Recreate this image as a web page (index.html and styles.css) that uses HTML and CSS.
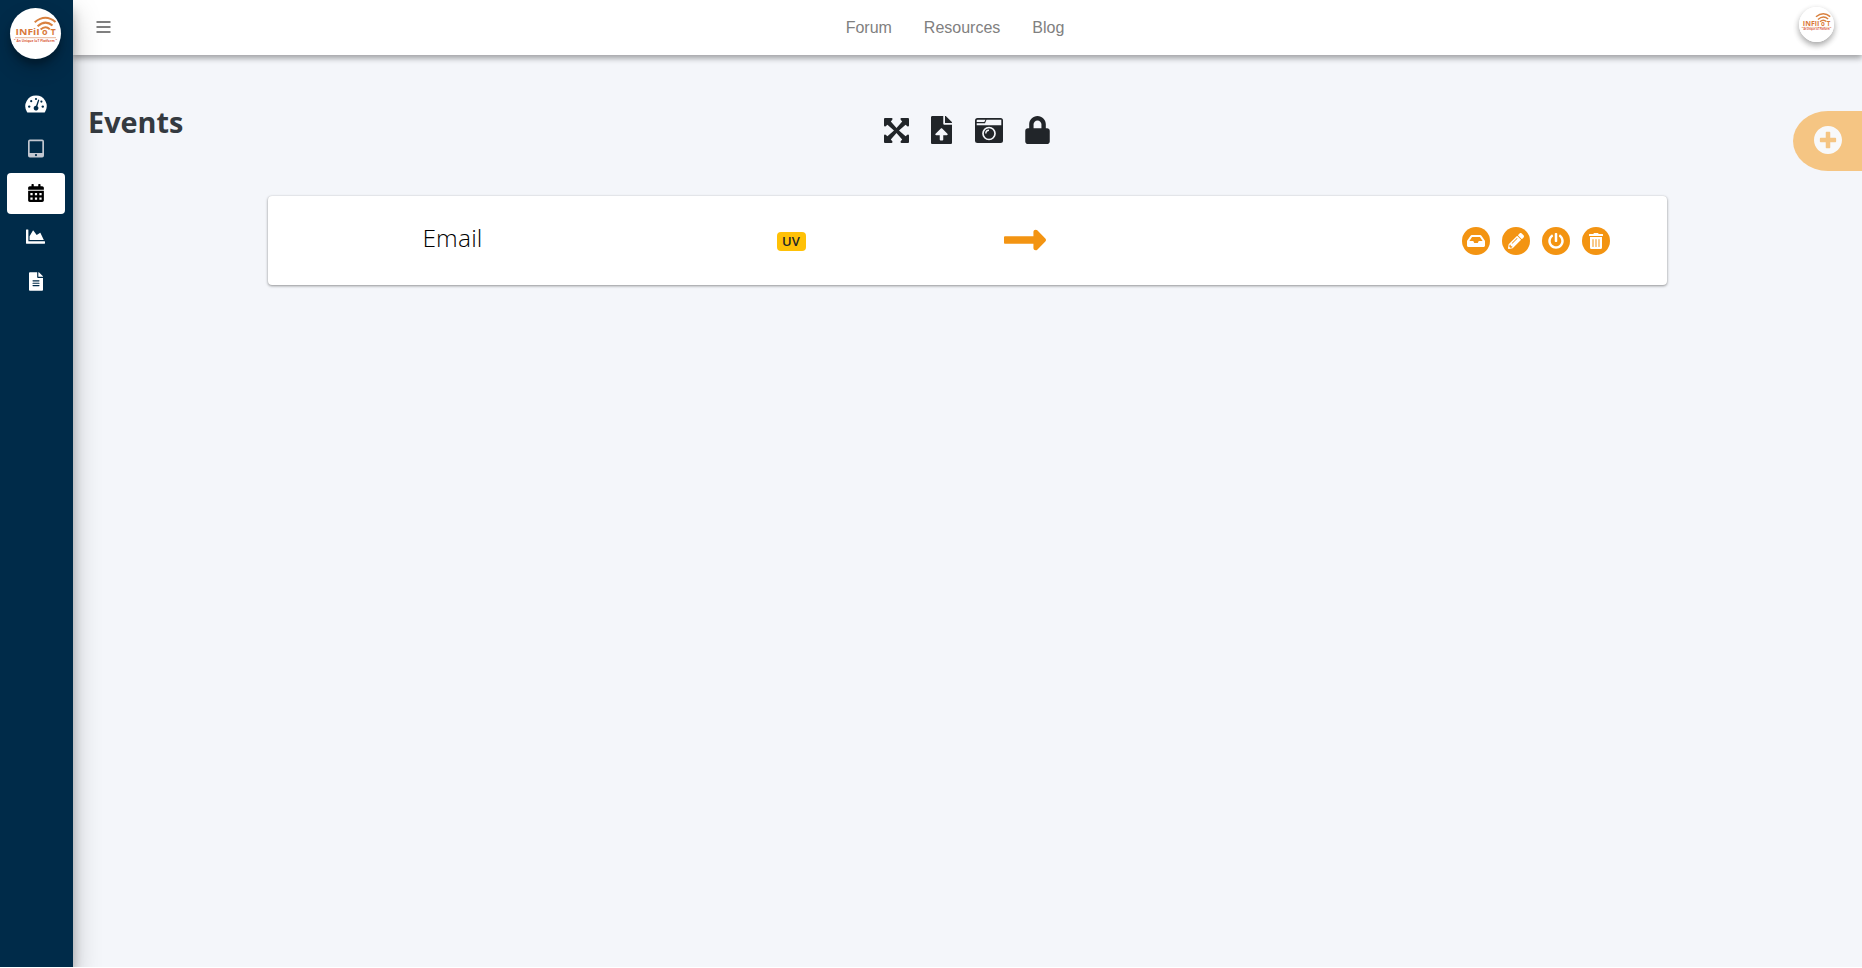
FILE: index.html
```
<!DOCTYPE html>
<html lang="en">
<head>
  <meta charset="UTF-8" />
  <title>Events</title>
  <link rel="stylesheet" href="styles.css">
</head>
<body>
  <svg class="defs">
    <symbol id="logo" viewBox="0 0 51 51" overflow="visible">
      <circle cx="25.5" cy="25.5" r="25.5" fill="#fff"/>
      <g fill="none" stroke="#d9813f" stroke-width="2">
        <path d="M24.7 14.2Q35.5 5.4 45.5 14"/>
        <path d="M27.6 18.2Q35.5 11.4 42.5 17.6"/>
        <path d="M30.6 21.6Q35.3 17.2 39.8 21.2"/>
      </g>
      <g fill="#d9793a" font-family="Open Sans, sans-serif" font-weight="700" font-size="9">
        <text x="5.6" y="27.4" textLength="24" lengthAdjust="spacingAndGlyphs">INFiI</text>
        <text x="32" y="27.4">o</text>
        <text x="40.6" y="27.4">T</text>
      </g>
      <path d="M5 29.7H46" stroke="#e0956a" stroke-width=".7"/>
      <text x="4" y="34.2" font-size="3.6" textLength="43" lengthAdjust="spacingAndGlyphs" fill="#d9583a" font-weight="700" font-family="Open Sans, sans-serif">" An Unique IoT Platform "</text>
    </symbol>
  </svg>

  <aside class="sidebar">
    <svg class="brand"><use href="#logo"/></svg>
    <nav class="menu">
      <a class="menu-item"><svg width="22" height="18" viewBox="0 0 22 18"><path fill="currentColor" d="M11 0.6A10.6 10.6 0 0 0 2 16.9Q2.3 17.4 2.9 17.4H19.1Q19.7 17.4 20 16.9A10.6 10.6 0 0 0 11 .6z"/><g fill="#002b49"><circle cx="11" cy="4" r="1.1"/><circle cx="6.2" cy="6.2" r="1.1"/><circle cx="4.2" cy="11.6" r="1.2"/><circle cx="17.8" cy="11.6" r="1.2"/><circle cx="16.4" cy="6.6" r="1.1"/><path d="M13.2 4.6l1.1.4-1.9 6.2a2.4 2.4 0 1 1-1.4-.4z"/></g></svg></a>
      <a class="menu-item muted"><svg width="16" height="19" viewBox="0 0 17 19"><path fill="currentColor" fill-rule="evenodd" d="M2 0H15a2 2 0 0 1 2 2V17a2 2 0 0 1-2 2H2a2 2 0 0 1-2-2V2A2 2 0 0 1 2 0zM1.8 1.8V14.2H15.2V1.8zM8.5 15.3a1.2 1.2 0 1 0 0 2.4 1.2 1.2 0 0 0 0-2.4z"/></svg></a>
      <a class="menu-item active"><svg width="16" height="18" viewBox="0 0 448 512"><path fill="currentColor" fill-rule="evenodd" d="M0 464c0 26.500 21.500 48 48 48h352c26.500 0 48-21.500 48-48V192H0zM64 256h64v64H64zm128 0h64v64h-64zm128 0h64v64h-64zM64 384h64v64H64zm128 0h64v64h-64zm128 0h64v64h-64zM400 64h-48V16c0-8.800-7.200-16-16-16h-32c-8.800 0-16 7.200-16 16v48H160V16c0-8.800-7.200-16-16-16h-32c-8.800 0-16 7.200-16 16v48H48C21.500 64 0 85.500 0 112v48h448v-48c0-26.500-21.500-48-48-48z"/></svg></a>
      <a class="menu-item"><svg width="19" height="19" viewBox="0 0 512 512"><path fill="currentColor" d="M500 384c6.600 0 12 5.400 12 12v40c0 6.600-5.400 12-12 12H12c-6.600 0-12-5.400-12-12V76c0-6.600 5.400-12 12-12h40c6.600 0 12 5.400 12 12v308h436zM372.700 159.500L288 216l-85.300-113.700c-5.100-6.800-15.500-6.300-19.900 1L96 248v104h384l-89.900-187.800c-3.200-6.500-11.400-8.700-17.400-4.700z"/></svg></a>
      <a class="menu-item"><svg width="14" height="19" viewBox="0 0 384 512"><path fill="currentColor" d="M224 136V0H24C10.700 0 0 10.700 0 24v464c0 13.300 10.700 24 24 24h336c13.300 0 24-10.700 24-24V160H248c-13.200 0-24-10.800-24-24zm64 236c0 6.600-5.400 12-12 12H108c-6.600 0-12-5.400-12-12v-8c0-6.600 5.400-12 12-12h168c6.600 0 12 5.400 12 12v8zm0-64c0 6.600-5.400 12-12 12H108c-6.600 0-12-5.400-12-12v-8c0-6.600 5.400-12 12-12h168c6.600 0 12 5.400 12 12v8zm0-72v8c0 6.600-5.400 12-12 12H108c-6.600 0-12-5.400-12-12v-8c0-6.600 5.400-12 12-12h168c6.600 0 12 5.400 12 12zm96-114.100v6.100H256V0h6.100c6.400 0 12.500 2.500 17 7l97.900 98c4.500 4.500 7 10.600 7 16.900z"/></svg></a>
    </nav>
  </aside>

  <div class="main">
    <header class="navbar">
      <svg class="bars" width="14" height="12" viewBox="0 0 14 12"><path d="M0 1H14M0 6H14M0 11H14" stroke="#808080" stroke-width="2"/></svg>
      <nav class="links">
        <a>Forum</a>
        <a>Resources</a>
        <a>Blog</a>
      </nav>
      <svg class="avatar"><use href="#logo"/></svg>
    </header>

    <section class="content">
      <div class="top">
        <h1>Events</h1>
        <div class="tools">
          <svg width="25" height="25" viewBox="0 0 25 25"><path fill="currentColor" d="M1 0H7.600Q9.200.4 8.300 1.700L6.800 3.400 12.500 10 18.200 3.400 16.700 1.700Q15.800.4 17.400 0H24Q25 0 25 1V7.600Q24.600 9.200 23.300 8.300L21.600 6.800 15 12.500 21.600 18.200 23.300 16.700Q24.600 15.800 25 17.400V24Q25 25 24 25H17.400Q15.800 24.600 16.700 23.300L18.200 21.600 12.500 15 6.800 21.600 8.300 23.300Q9.200 24.600 7.600 25H1Q0 25 0 24V17.400Q.4 15.800 1.700 16.700L3.400 18.200 10 12.500 3.400 6.800 1.700 8.300Q.4 9.200 0 7.600V1Q0 0 1 0z"/></svg>
          <svg width="21" height="28" viewBox="0 0 384 512"><path fill="currentColor" d="M224 136V0H24C10.700 0 0 10.700 0 24v464c0 13.300 10.700 24 24 24h336c13.300 0 24-10.700 24-24V160H248c-13.200 0-24-10.800-24-24zm65.180 216.010H224v80c0 8.840-7.160 16-16 16h-32c-8.840 0-16-7.160-16-16v-80H94.820c-14.280 0-21.410-17.290-11.270-27.360l96.420-95.700c6.650-6.610 17.390-6.610 24.040 0l96.420 95.700c10.150 10.070 3.030 27.360-11.250 27.360zM377 105L279.100 7c-4.500-4.500-10.600-7-17-7H256v128h128v-6.100c0-6.300-2.500-12.400-7-16.900z"/></svg>
          <svg width="28" height="25" viewBox="0 0 28 25"><rect width="28" height="25" rx="2.500" fill="currentColor"/><path fill="#f4f6fa" d="M1.700 2.500Q1.700 1.700 2.500 1.700H10.500L9.300 4.100H1.700zM11.500 1.700H26.300V7.200H1.700V5.200H10z"/><circle cx="14" cy="15.500" r="6" fill="none" stroke="#f4f6fa" stroke-width="1.700"/><path d="M10.800 15.500A3.200 3.200 0 0 1 14 12.300" fill="none" stroke="#f4f6fa" stroke-width="1.400"/></svg>
          <svg width="25" height="28" viewBox="0 0 448 512"><path fill="currentColor" d="M400 224h-24v-72C376 68.200 307.800 0 224 0S72 68.200 72 152v72H48c-26.500 0-48 21.500-48 48v192c0 26.500 21.500 48 48 48h352c26.500 0 48-21.500 48-48V272c0-26.500-21.500-48-48-48zm-104 0H152v-72c0-39.700 32.300-72 72-72s72 32.300 72 72v72z"/></svg>
        </div>
        <a class="add"><svg width="28" height="28" viewBox="8 8 496 496"><path fill="#f8f9fa" d="M256 8C119 8 8 119 8 256s111 248 248 248 248-111 248-248S393 8 256 8zm144 276c0 6.600-5.400 12-12 12h-92v92c0 6.600-5.400 12-12 12h-56c-6.600 0-12-5.400-12-12v-92h-92c-6.600 0-12-5.400-12-12v-56c0-6.600 5.400-12 12-12h92v-92c0-6.600 5.400-12 12-12h56c6.600 0 12 5.400 12 12v92h92c6.600 0 12 5.400 12 12v56z"/></svg></a>
      </div>

      <div class="card">
        <div class="name">Email</div>
        <div class="tag"><span class="badge">UV</span></div>
        <div class="arrow"><svg width="42" height="48" viewBox="0 0 448 512"><path fill="currentColor" d="M313.941 216H12c-6.627 0-12 5.373-12 12v56c0 6.627 5.373 12 12 12h301.941v46.059c0 21.382 25.851 32.090 40.971 16.971l86.059-86.059c9.373-9.373 9.373-24.569 0-33.941l-86.059-86.059c-15.119-15.119-40.971-4.411-40.971 16.971V216z"/></svg></div>
        <div class="actions">
          <a class="btn"><svg width="18" height="16" viewBox="0 0 576 512"><path fill="currentColor" d="M567.938 243.908L462.250 85.374A48.003 48.003 0 0 0 422.311 64H153.689a48 48 0 0 0-39.938 21.374L8.062 243.908A47.994 47.994 0 0 0 0 270.533V400c0 26.510 21.490 48 48 48h480c26.510 0 48-21.490 48-48V270.533a47.994 47.994 0 0 0-8.062-26.625zM162.252 128h251.497l85.333 128H376l-32 64H232l-32-64H76.918l85.334-128z"/></svg></a>
          <a class="btn"><svg width="16" height="16" viewBox="0 0 512 512"><path fill="currentColor" d="M497.900 142.100l-46.100 46.100c-4.700 4.700-12.300 4.700-17 0l-111-111c-4.700-4.700-4.700-12.300 0-17l46.100-46.100c18.700-18.700 49.100-18.700 67.900 0l60.100 60.100c18.800 18.700 18.800 49.100 0 67.900zM284.200 99.800L21.600 362.400.4 483.900c-2.900 16.400 11.400 30.600 27.800 27.800l121.500-21.300 262.600-262.600c4.700-4.700 4.700-12.300 0-17l-111-111c-4.800-4.700-12.400-4.700-17.100 0zM124.100 339.900c-5.500-5.500-5.500-14.300 0-19.800l154-154c5.500-5.500 14.300-5.500 19.800 0s5.500 14.300 0 19.800l-154 154c-5.500 5.500-14.300 5.500-19.800 0zM88 424h48v36.300l-64.500 11.300-31.100-31.100L51.700 376H88v48z"/></svg></a>
          <a class="btn"><svg width="16" height="16" viewBox="0 0 512 512"><path fill="currentColor" d="M400 54.100c63 45 104 118.600 104 201.900 0 136.800-110.800 247.700-247.500 248C120 504.300 8.200 393 8 256.400 7.900 173.100 48.900 99.300 111.800 54.200c11.700-8.300 28-4.800 35 7.700L162.600 90c5.900 10.500 3.100 23.800-6.600 31-41.500 30.800-68 79.600-68 134.900-.1 92.300 74.500 168.100 168 168.100 91.600 0 168.600-74.200 168-169.100-.3-51.800-24.700-101.800-68.100-134-9.700-7.200-12.400-20.500-6.500-30.900l15.800-28.100c7-12.400 23.200-16.100 34.800-7.800zM296 264V24c0-13.300-10.700-24-24-24h-32c-13.300 0-24 10.700-24 24v240c0 13.300 10.700 24 24 24h32c13.300 0 24-10.700 24-24z"/></svg></a>
          <a class="btn"><svg width="14" height="16" viewBox="0 0 448 512"><path fill="currentColor" d="M32 464a48 48 0 0 0 48 48h288a48 48 0 0 0 48-48V128H32zm272-256a16 16 0 0 1 32 0v224a16 16 0 0 1-32 0zm-96 0a16 16 0 0 1 32 0v224a16 16 0 0 1-32 0zm-96 0a16 16 0 0 1 32 0v224a16 16 0 0 1-32 0zM432 32H312l-9.400-18.700A24 24 0 0 0 281.100 0H166.800a23.720 23.720 0 0 0-21.400 13.300L136 32H16A16 16 0 0 0 0 48v32a16 16 0 0 0 16 16h416a16 16 0 0 0 16-16V48a16 16 0 0 0-16-16z"/></svg></a>
        </div>
      </div>
    </section>
  </div>
</body>
</html>
```
FILE: styles.css
```
* {
  box-sizing: border-box;
}
html {
  background: #fff;
}
body {
  margin: 0;
  display: flex;
  height: 967px;
  overflow: hidden;
  background: #f4f6fa;
  font-family: "Open Sans", sans-serif;
  color: #212529;
}
svg {
  display: block;
  flex: none;
}
.defs {
  position: absolute;
  width: 0;
  height: 0;
}
.sidebar {
  width: 73px;
  flex: none;
  background: #002b49;
  box-shadow: 0 14px 28px rgba(0,0,0,.25), 0 10px 10px rgba(0,0,0,.22);
  z-index: 2;
}
.brand {
  width: 51px;
  height: 51px;
  margin: 8px 0 0 10px;
  overflow: visible;
  border-radius: 50%;
  box-shadow: 0 10px 20px rgba(0,0,0,.19), 0 6px 6px rgba(0,0,0,.23);
}
.menu {
  display: flex;
  flex-direction: column;
  gap: 3.300px;
  padding: 25px 8px 0 7px;
}
.menu-item {
  display: flex;
  align-items: center;
  justify-content: center;
  height: 41px;
  padding: 0 1px 1px 0;
  border-radius: 4px;
  color: #fff;
}
.muted {
  color: #c2c7d0;
}
.active {
  background: #fff;
  color: #000;
}
.main {
  flex: 1;
}
.navbar {
  position: relative;
  height: 55px;
  display: flex;
  justify-content: space-between;
  padding: 0 28px 0 23px;
  background: #fff;
  box-shadow: 0 3px 6px rgba(0,0,0,.16), 0 3px 6px rgba(0,0,0,.23);
}
.bars {
  width: 15px;
  margin-top: 21px;
}
.links {
  display: flex;
  gap: 32px;
  padding-top: 19px;
  font-family: "Liberation Sans", sans-serif;
  font-size: 16px;
  line-height: 18px;
  color: #808080;
}
.avatar {
  width: 35px;
  height: 35px;
  margin-top: 7px;
  overflow: visible;
  border-radius: 50%;
  box-shadow: 0 3px 6px rgba(0,0,0,.16), 0 3px 6px rgba(0,0,0,.23);
}
.top {
  display: grid;
  grid-template-columns: 796px auto 1fr;
  height: 141px;
  padding-left: 15px;
}
h1 {
  margin: 47px 0 0;
  font-size: 28.800px;
  line-height: 40px;
  font-weight: 700;
  color: #343a40;
}
.tools {
  display: flex;
  align-items: center;
  gap: 22.300px;
  height: 28px;
  margin-top: 61px;
}
.add {
  justify-self: end;
  width: 69px;
  height: 60px;
  margin-top: 56px;
  padding: 14.500px 0 0 20.500px;
  border-radius: 35px 0 0 35px / 30px 0 0 30px;
  background: #f5c583;
}
.card {
  display: flex;
  width: 1399px;
  height: 89px;
  margin-left: 195px;
  border-radius: 4px;
  background: #fff;
  box-shadow: 0 0 1px rgba(0,0,0,.125), 0 1px 3px rgba(0,0,0,.4);
}
.name {
  width: 369px;
  padding-top: 24px;
  text-align: center;
  font-size: 24.500px;
  line-height: 36px;
  letter-spacing: .2px;
  font-weight: 300;
  color: #000;
}
.tag {
  width: 308px;
  padding-top: 36px;
  display: flex;
  justify-content: center;
}
.badge {
  width: 29px;
  height: 19px;
  border-radius: 4px;
  background: #ffc107;
  font: 600 13px/18px "Open Sans", sans-serif;
  text-align: center;
}
.arrow {
  width: 158px;
  padding: 20px 0 0 59px;
  color: #f39412;
}
.actions {
  display: flex;
  flex: 1;
  justify-content: flex-end;
  gap: 12px;
  padding: 31px 57px 0 0;
}
.btn {
  display: flex;
  align-items: center;
  justify-content: center;
  width: 28px;
  height: 28px;
  border-radius: 50%;
  background: #f39412;
  color: #fff;
}
```
